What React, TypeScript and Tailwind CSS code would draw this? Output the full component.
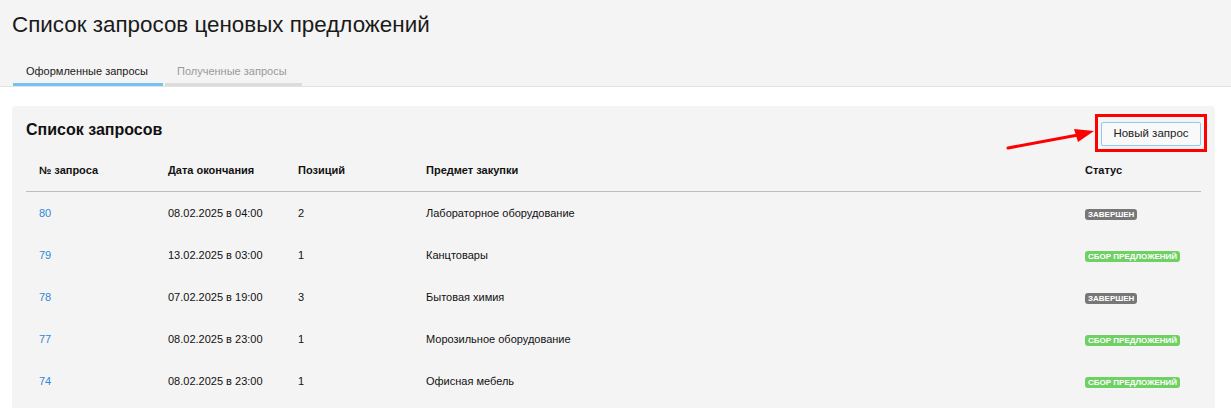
import React from "react"

type Request = {
  id: number
  deadline: string
  positions: number
  subject: string
  status: "done" | "collecting"
}

const requests: Request[] = [
  { id: 80, deadline: "08.02.2025 в 04:00", positions: 2, subject: "Лабораторное оборудование", status: "done" },
  { id: 79, deadline: "13.02.2025 в 03:00", positions: 1, subject: "Канцтовары", status: "collecting" },
  { id: 78, deadline: "07.02.2025 в 19:00", positions: 3, subject: "Бытовая химия", status: "done" },
  { id: 77, deadline: "08.02.2025 в 23:00", positions: 1, subject: "Морозильное оборудование", status: "collecting" },
  { id: 74, deadline: "08.02.2025 в 23:00", positions: 1, subject: "Офисная мебель", status: "collecting" },
]

const cols = "grid grid-cols-[129px_130px_128px_1fr_129px]"

function StatusBadge({ status }: { status: Request["status"] }) {
  if (status === "done") {
    return (
      <span className="inline-block rounded-[3px] bg-[#777777] px-[3px] text-[8px] font-bold leading-[11px] text-white">
        ЗАВЕРШЕН
      </span>
    )
  }
  return (
    <span className="inline-block rounded-[3px] bg-[#6fd063] px-[3px] text-[8px] font-bold leading-[11px] text-white">
      СБОР ПРЕДЛОЖЕНИЙ
    </span>
  )
}

export default function App() {
  return (
    <div className="min-h-screen bg-white font-['Liberation_Sans',Arial,sans-serif] text-[#222]">
      {/* Шапка страницы */}
      <header className="border-b border-[#e2e2e2] bg-[#f4f4f4] px-[12px]">
        <h1 className="pt-[11px] text-[22.4px] font-normal leading-[28px] text-[#1a1a1a]">
          Список запросов ценовых предложений
        </h1>
        <nav className="ml-[1px] mt-[18px] flex gap-[2px] text-[11px] leading-[16px]">
          <div className="w-[150px] border-b-[3px] border-[#78c2f2] pb-[4px] pl-[13px] pt-[6px] text-[#1a1a1a]">
            Оформленные запросы
          </div>
          <div className="w-[137px] border-b-[3px] border-[#dcdcdc] pb-[4px] pl-[12px] pt-[6px] text-[#9a9a9a]">
            Полученные запросы
          </div>
        </nav>
      </header>

      {/* Карточка со списком */}
      <section className="relative ml-[12px] mr-[16px] mt-[19px] rounded-[4px] bg-[#f4f4f4] px-[14px] pb-[20px] pt-[14px]">
        <div className="flex items-start justify-between">
          <h2 className="text-[16px] font-bold leading-[20px] text-[#111]">Список запросов</h2>
          <div className="relative">
            <button className="h-[24px] w-[100px] rounded-[2px] border border-[#8ccbf2] bg-[#f9f9f9] text-[11.5px] text-[#222]">
              Новый запрос
            </button>
            <div className="pointer-events-none absolute -inset-[6px] border-[3px] border-[#ff0000]" />
          </div>
        </div>

        {/* стрелка-пометка */}
        <svg
          className="pointer-events-none absolute left-[994px] top-[22px]"
          width="92"
          height="24"
          viewBox="0 0 92 24"
        >
          <line x1="2" y1="20" x2="72" y2="7" stroke="#ff0000" strokeWidth="3" strokeLinecap="round" />
          <polygon points="88,3 68,1 72,14" fill="#ff0000" />
        </svg>

        <div className={`${cols} border-b border-[#bdbdbd] pb-[14px] pt-[17px] text-[11px] font-bold leading-[14px] text-[#111]`}>
          <div className="pl-[13px]">№ запроса</div>
          <div className="pl-[13px]">Дата окончания</div>
          <div className="pl-[13px]">Позиций</div>
          <div className="pl-[13px]">Предмет закупки</div>
          <div className="pl-[13px]">Статус</div>
        </div>

        {requests.map((r) => (
          <div key={r.id} className={`${cols} h-[42px] items-center text-[11px] leading-[14px] text-[#111]`}>
            <div className="pl-[13px] text-[#2f88d4]">{r.id}</div>
            <div className="pl-[13px]">{r.deadline}</div>
            <div className="pl-[13px]">{r.positions}</div>
            <div className="pl-[13px]">{r.subject}</div>
            <div className="pl-[13px]">
              <StatusBadge status={r.status} />
            </div>
          </div>
        ))}
      </section>
    </div>
  )
}
